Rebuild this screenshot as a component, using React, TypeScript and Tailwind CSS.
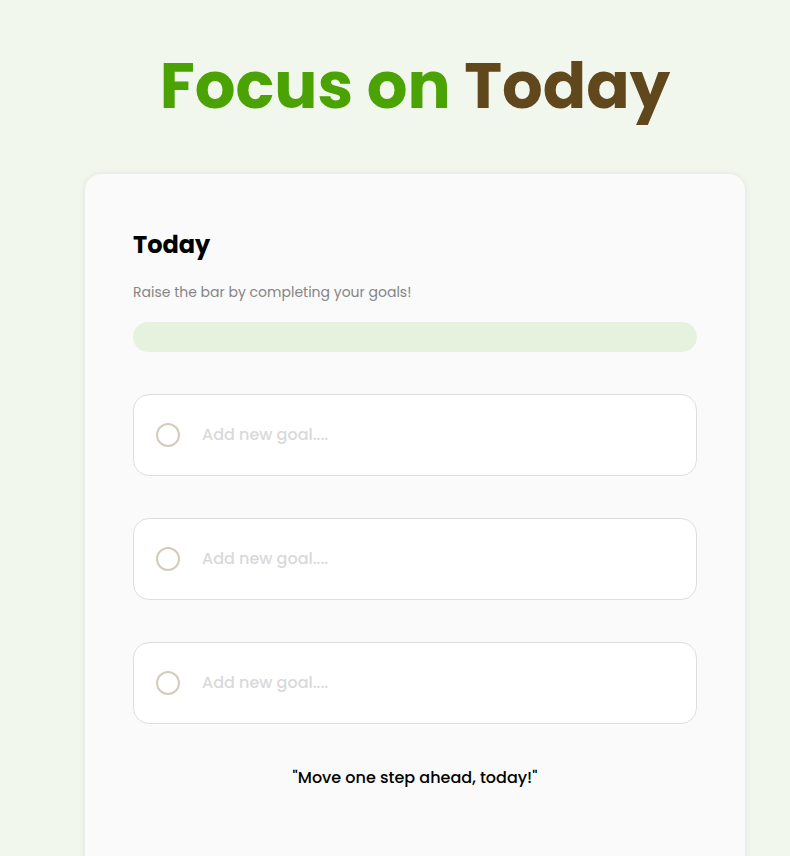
import React, { useState } from 'react'

const font = { fontFamily: 'Poppins, "Open Sans", "DejaVu Sans", sans-serif' }

function GoalInput({ value, onChange }: { value: string; onChange: (v: string) => void }) {
    return (
        <div className="flex items-center h-[82px] rounded-2xl border border-[#dedede] bg-white pl-[22px] pr-6">
            <div className="w-6 h-6 rounded-full border-2 border-[#d3cbbd] shrink-0" />
            <input
                value={value}
                onChange={(e) => onChange(e.target.value)}
                placeholder="Add new goal...."
                className="ml-[22px] flex-1 bg-transparent outline-none text-base font-medium text-black placeholder:text-[#d9d9d9]"
                style={font}
            />
        </div>
    )
}

export default function App() {
    const [goals, setGoals] = useState<string[]>(['', '', ''])

    return (
        <div className="min-h-screen bg-[#f1f7ec] pl-10" style={font}>
            <div className="flex flex-col items-center">
                <h1 className="mt-[42px] text-[64px] leading-[88px] font-bold">
                    <span className="text-[#4aa302]">Focus on </span>
                    <span className="text-[#61481c]">Today</span>
                </h1>

                <div className="mt-[44px] w-[660px] rounded-2xl bg-[#fafafa] shadow-[0_0_6px_rgba(0,0,0,0.08)] px-12 pt-[53px] pb-[120px]">
                    <h2 className="text-2xl font-bold text-black leading-9">Today</h2>
                    <p className="mt-[19px] text-sm text-[#858585] leading-5">Raise the bar by completing your goals!</p>
                    <div className="mt-[20px] h-[30px] rounded-full bg-[#e6f2de]" />

                    <div className="mt-[42px] flex flex-col gap-[42px]">
                        {goals.map((g, i) => (
                            <GoalInput
                                key={i}
                                value={g}
                                onChange={(v) => setGoals(goals.map((x, j) => (j === i ? v : x)))}
                            />
                        ))}
                    </div>

                    <p className="mt-[42px] text-center text-base font-medium text-black">"Move one step ahead, today!"</p>
                </div>
            </div>
        </div>
    )
}
